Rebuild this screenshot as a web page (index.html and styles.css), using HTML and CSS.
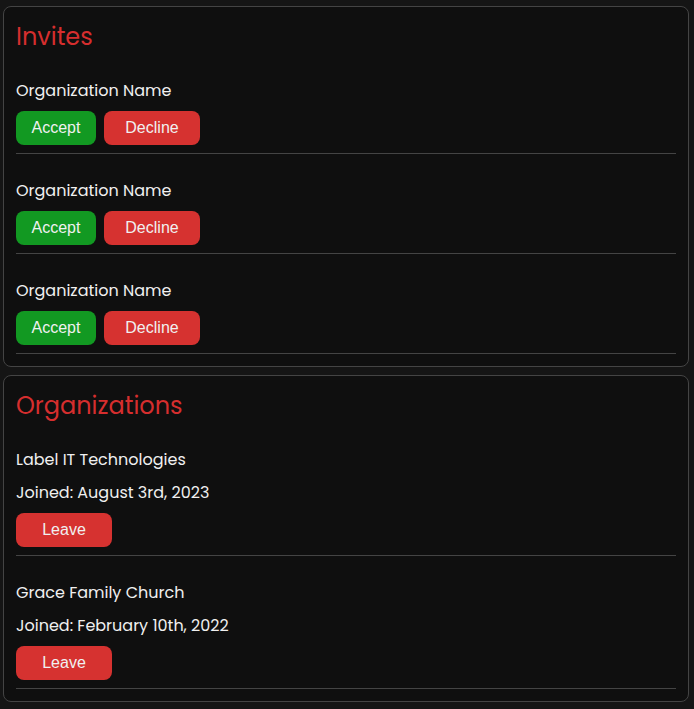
FILE: index.html
```html
<!DOCTYPE html>
<html lang="en">
<head>
  <meta charset="utf-8">
  <meta name="viewport" content="width=device-width, initial-scale=1">
  <title>Organizations</title>
  <link rel="stylesheet" href="styles.css">
</head>
<body>
  <main class="page">
    <section class="card">
      <h2 class="card-title">Invites</h2>
      <ul class="list">
        <li class="item">
          <p class="text">Organization Name</p>
          <div class="actions">
            <button class="button accept" type="button">Accept</button>
            <button class="button danger" type="button">Decline</button>
          </div>
        </li>
        <li class="item">
          <p class="text">Organization Name</p>
          <div class="actions">
            <button class="button accept" type="button">Accept</button>
            <button class="button danger" type="button">Decline</button>
          </div>
        </li>
        <li class="item">
          <p class="text">Organization Name</p>
          <div class="actions">
            <button class="button accept" type="button">Accept</button>
            <button class="button danger" type="button">Decline</button>
          </div>
        </li>
      </ul>
    </section>
    <section class="card">
      <h2 class="card-title">Organizations</h2>
      <ul class="list">
        <li class="item">
          <p class="text">Label IT Technologies</p>
          <p class="text">Joined: August 3rd, 2023</p>
          <div class="actions">
            <button class="button danger" type="button">Leave</button>
          </div>
        </li>
        <li class="item">
          <p class="text">Grace Family Church</p>
          <p class="text">Joined: February 10th, 2022</p>
          <div class="actions">
            <button class="button danger" type="button">Leave</button>
          </div>
        </li>
      </ul>
    </section>
  </main>
</body>
</html>
```
FILE: styles.css
```css
* {
  box-sizing: border-box;
}

body {
  margin: 0;
  background: #151515;
  color: #f0f0f0;
  font-family: Poppins, Inter, sans-serif;
  font-size: 16px;
  line-height: 25px;
}

.page {
  display: flex;
  flex-direction: column;
  gap: 8px;
  padding: 6px 5px 6px 3px;
}

.card {
  padding: 12px;
  border: 1px solid #444;
  border-radius: 8px;
  background: #0f0f0f;
}

.card-title {
  margin: 0;
  color: #d62e2e;
  font-size: 24px;
  font-weight: 400;
  line-height: 35px;
}

.list {
  margin: 0;
  padding: 0;
  list-style: none;
}

.item {
  display: flex;
  flex-direction: column;
  gap: 8px;
  padding: 24px 0 8px;
  border-bottom: 1px solid #444;
}

.text {
  margin: 0;
}

.actions {
  display: flex;
  gap: 8px;
}

.button {
  height: 34px;
  padding: 0;
  border: 0;
  border-radius: 8px;
  color: #f0f0f0;
  font-family: "Liberation Sans", Arial, sans-serif;
  font-size: 16px;
  cursor: pointer;
}

.accept {
  width: 80px;
  background: #129922;
}

.danger {
  width: 96px;
  background: #d63230;
}
```
